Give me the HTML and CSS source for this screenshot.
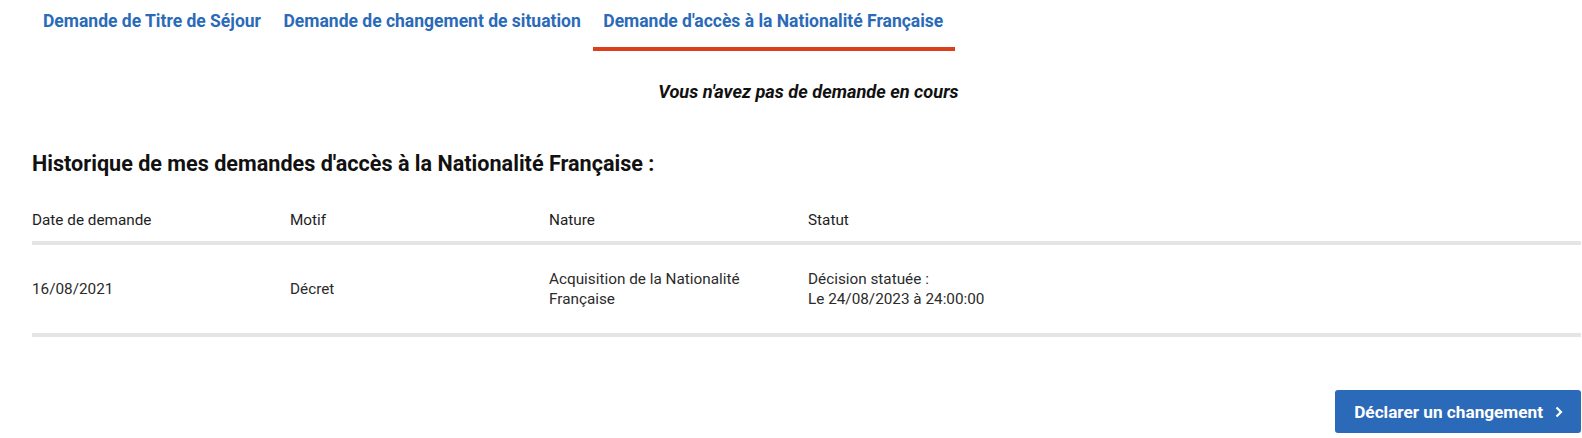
FILE: index.html
```html
<!DOCTYPE html>
<html lang="fr">
<head>
<meta charset="utf-8">
<title>Demandes</title>
<link rel="stylesheet" href="styles.css">
</head>
<body>
<nav class="tabs">
  <a class="tab">Demande de Titre de Séjour</a>
  <a class="tab">Demande de changement de situation</a>
  <a class="tab active">Demande d'accès à la Nationalité Française</a>
</nav>
<main class="content">
  <p class="empty">Vous n'avez pas de demande en cours</p>
  <h2 class="title">Historique de mes demandes d'accès à la Nationalité Française :</h2>
  <div class="table">
    <div class="row head">
      <div>Date de demande</div>
      <div>Motif</div>
      <div>Nature</div>
      <div>Statut</div>
      <div></div>
    </div>
    <div class="row body">
      <div>16/08/2021</div>
      <div>Décret</div>
      <div>Acquisition de la Nationalité<br>Française</div>
      <div>Décision statuée :<br>Le 24/08/2023 à 24:00:00</div>
      <div></div>
    </div>
  </div>
  <div class="actions">
    <button class="btn">Déclarer un changement
      <svg class="chev" width="8" height="12" viewBox="0 0 8 12"><polyline points="1.5,1.5 6,6 1.5,10.5" fill="none" stroke="#fff" stroke-width="2.2"/></svg>
    </button>
  </div>
</main>
</body>
</html>
```
FILE: styles.css
```css
* { box-sizing: border-box; }
body {
  margin: 0;
  font-family: Roboto, "Liberation Sans", sans-serif;
  color: #1e1e1e;
  background: #fff;
}
.tabs {
  display: flex;
  gap: 2.5px;
  padding-left: 33px;
}
.tab {
  padding: 11px 10px 16px 10px;
  line-height: 20px;
  font-size: 17.5px;
  font-weight: 700;
  color: #2a6ab8;
  border-bottom: 4px solid transparent;
}
.tab.active {
  padding-right: 12px;
  border-bottom-color: #dc3f1c;
}
.content {
  padding-left: 32px;
  padding-right: 1px;
}
.empty {
  margin: 31px 0 0;
  padding-left: 4px;
  text-align: center;
  font-size: 18.2px;
  line-height: 20px;
  font-style: italic;
  font-weight: 700;
  color: #111;
}
.title {
  margin: 49px 0 0;
  font-size: 21.6px;
  line-height: 26px;
  font-weight: 700;
  color: #111;
}
.table {
  margin-top: 33px;
  font-size: 15.3px;
  line-height: 20px;
  color: #2b2b2b;
}
.row {
  display: grid;
  grid-template-columns: 258px 259px 259px 259px 1fr;
  align-items: center;
  border-bottom: 4px solid #e5e5e5;
}
.row.head {
  padding-bottom: 11px;
  color: #1e1e1e;
}
.row.body {
  padding: 24px 0;
}
.actions {
  display: flex;
  justify-content: flex-end;
  margin-top: 53px;
}
.btn {
  display: flex;
  align-items: center;
  gap: 12px;
  height: 43px;
  padding: 0 18px 0 19px;
  border: 0;
  border-radius: 3px;
  background: #2a6ab8;
  color: #fff;
  font-family: Roboto, "Liberation Sans", sans-serif;
  font-size: 17.2px;
  font-weight: 700;
}
.chev { display: block; }
```
